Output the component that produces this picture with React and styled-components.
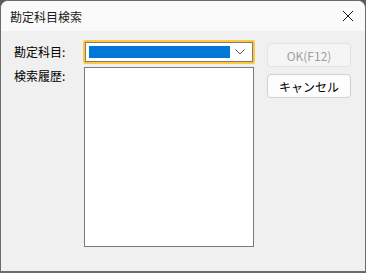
import React from 'react'
import styled, { createGlobalStyle } from 'styled-components'

const GlobalStyle = createGlobalStyle`
  html, body {
    margin: 0;
    padding: 0;
    background: #5c5c5c;
  }
  body {
    font-family: "Noto Sans CJK JP", "Noto Sans", sans-serif;
    font-size: 12px;
  }
`

const Window = styled.div`
  width: 366px;
  height: 273px;
  box-sizing: border-box;
  border: 1px solid #6b6b6b;
  border-bottom-width: 2px;
  border-radius: 8px 8px 0 0;
  background: #f0f0f0;
  display: flex;
  flex-direction: column;
  overflow: hidden;
`

const TitleBar = styled.div`
  height: 30px;
  background: #fafafa;
  display: flex;
  align-items: center;
  justify-content: space-between;
  padding: 0 8px 0 9px;
  color: #1a1a1a;
  font-size: 12px;
`

const CloseButton = styled.div`
  width: 18px;
  height: 18px;
  display: flex;
  align-items: center;
  justify-content: center;
`

const Body = styled.div`
  flex: 1;
  display: flex;
  padding: 9px 13px 0 13px;
  gap: 12px;
`

const Form = styled.div`
  display: grid;
  grid-template-columns: 69px 172px;
  grid-template-rows: 24px 180px;
  row-gap: 3px;
`

const Label = styled.div`
  font-size: 12px;
  color: #000;
  line-height: 16px;
  padding-top: ${p => p.top}px;
`

const Combo = styled.div`
  box-sizing: border-box;
  height: 24px;
  border: 2px solid #ffc83d;
  border-radius: 2px;
  display: flex;
`

const ComboInner = styled.div`
  flex: 1;
  border: 1px solid #7a7a7a;
  background: #fff;
  display: flex;
  align-items: center;
  padding: 0 2px 0 3px;
`

const Selection = styled.div`
  flex: 1;
  height: 12px;
  background: #0078d7;
`

const Chevron = styled.div`
  width: 20px;
  display: flex;
  align-items: center;
  justify-content: center;
`

const ListBox = styled.div`
  box-sizing: border-box;
  margin: 0 1px 0 1px;
  border: 1px solid #7a7a7a;
  background: #fff;
`

const Buttons = styled.div`
  display: flex;
  flex-direction: column;
  gap: 7px;
  padding-top: 3px;
`

const Button = styled.div`
  box-sizing: border-box;
  width: 84px;
  height: 24px;
  border-radius: 4px;
  border: 1px solid ${p => (p.disabled ? '#e3e3e3' : '#d0d0d0')};
  background: ${p => (p.disabled ? '#f5f5f5' : '#fdfdfd')};
  color: ${p => (p.disabled ? '#a0a0a0' : '#000')};
  display: flex;
  align-items: center;
  justify-content: center;
  font-size: 12px;
`

export default function App() {
  return (
    <>
      <GlobalStyle />
      <Window>
        <TitleBar>
          <span>勘定科目検索</span>
          <CloseButton>
            <svg width="12" height="12" viewBox="0 0 12 12">
              <path d="M1 1L11 11M11 1L1 11" stroke="#1a1a1a" strokeWidth="1" />
            </svg>
          </CloseButton>
        </TitleBar>
        <Body>
          <Form>
            <Label top={4}>勘定科目:</Label>
            <Combo>
              <ComboInner>
                <Selection />
                <Chevron>
                  <svg width="10" height="6" viewBox="0 0 10 6">
                    <path d="M0.5 0.5L5 5L9.5 0.5" fill="none" stroke="#555" strokeWidth="1" />
                  </svg>
                </Chevron>
              </ComboInner>
            </Combo>
            <Label top={1}>検索履歴:</Label>
            <ListBox />
          </Form>
          <Buttons>
            <Button disabled>OK(F12)</Button>
            <Button>キャンセル</Button>
          </Buttons>
        </Body>
      </Window>
    </>
  )
}
